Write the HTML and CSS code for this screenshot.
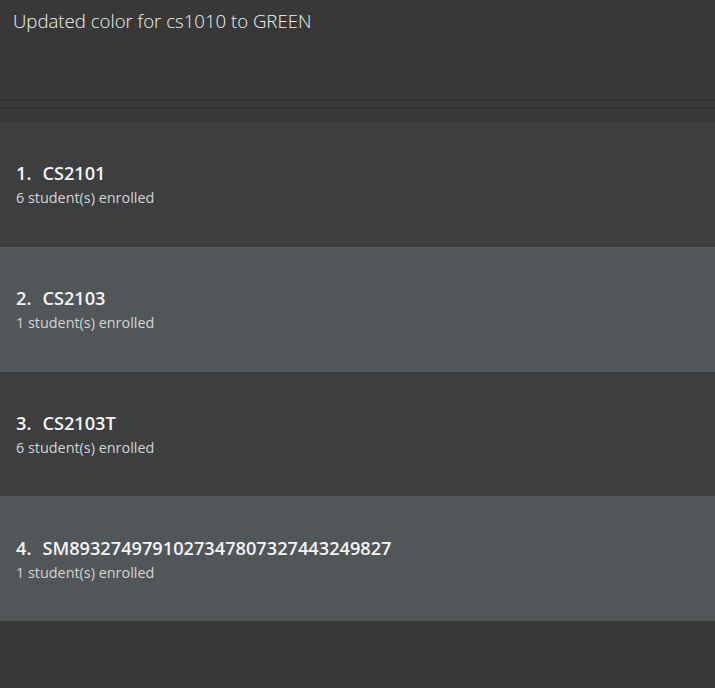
FILE: index.html
```html
<!DOCTYPE html>
<html>
<head>
<meta charset="utf-8">
<link rel="stylesheet" href="styles.css">
</head>
<body>
<div class="app">
  <div class="result">Updated color for cs1010 to GREEN</div>
  <div class="divider"></div>
  <div class="list">
    <div class="cell even">
      <div class="title"><span class="idx">1.</span><span class="name">CS2101</span></div>
      <div class="sub">6 student(s) enrolled</div>
    </div>
    <div class="cell odd">
      <div class="title"><span class="idx">2.</span><span class="name">CS2103</span></div>
      <div class="sub">1 student(s) enrolled</div>
    </div>
    <div class="cell even">
      <div class="title"><span class="idx">3.</span><span class="name">CS2103T</span></div>
      <div class="sub">6 student(s) enrolled</div>
    </div>
    <div class="cell odd">
      <div class="title"><span class="idx">4.</span><span class="name">SM8932749791027347807327443249827</span></div>
      <div class="sub">1 student(s) enrolled</div>
    </div>
  </div>
</div>
</body>
</html>
```

FILE: styles.css
```css
html, body {
  margin: 0;
  padding: 0;
  background: #383838;
}
.app {
  width: 715px;
  height: 688px;
  background: #383838;
  display: flex;
  flex-direction: column;
}
.result {
  height: 101px;
  box-sizing: border-box;
  padding: 8px 0 0 13px;
  font-family: "Open Sans", sans-serif;
  font-weight: 300;
  font-size: 18.6px;
  color: #f2f2f2;
  border-bottom: 1px solid #2e2e2e;
}
.divider {
  height: 6px;
  background: #3a3a3a;
  border-bottom: 1px solid #2e2e2e;
  margin-bottom: 14px;
}
.list {
  display: flex;
  flex-direction: column;
}
.cell {
  height: 124.75px;
  box-sizing: border-box;
  padding: 0 16px 0;
  display: flex;
  flex-direction: column;
  justify-content: center;
}
.cell.even { background: #3c3e3f; }
.cell.odd { background: #515658; }
.title {
  display: flex;
  gap: 11px;
  font-family: "Open Sans", sans-serif;
  font-weight: 600;
  font-size: 18.2px;
  line-height: 24px;
  color: #f4f4f4;
}
.sub {
  font-family: "Open Sans", sans-serif;
  font-size: 14.4px;
  line-height: 18px;
  color: #d4d4d4;
  margin-top: 4px;
}
```
